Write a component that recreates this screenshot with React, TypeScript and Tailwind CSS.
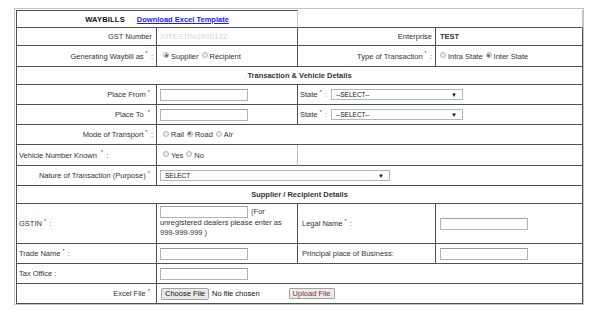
import React from "react";

const D = "border-[#505050]";

function Req() {
  return <span className="text-[#ff0000] text-[6px] relative -top-[3px] ml-[2px] leading-none">*</span>;
}

function Radio({ checked }: { checked?: boolean }) {
  return (
    <span className="inline-flex items-center justify-center w-[6px] h-[6px] rounded-full border border-[#b5b5b5] bg-[#ececec] mr-[2px] align-middle relative -top-[1px]">
      {checked && <span className="w-[3px] h-[3px] rounded-full bg-[#6b6b6b]" />}
    </span>
  );
}

function Input({ w = 88 }: { w?: number }) {
  return <span className="inline-block h-[12px] w-[88px] border border-[#b3b3b3] border-t-[#9d9d9d] bg-white align-middle" style={{ width: w }} />;
}

function Select({ w, text }: { w: number; text: string }) {
  return (
    <span className="inline-flex items-center justify-between h-[11px] border border-[#a9b7ca] bg-white pl-[4px] pr-[5px] text-[6.5px] text-[#111] align-middle" style={{ width: w }}>
      <span>{text}</span>
      <span className="text-[6px] leading-none">▼</span>
    </span>
  );
}

export default function App() {
  const cell = `border-r border-b ${D} flex items-center text-[#333]`;
  return (
    <div className="w-[592px] h-[313px] bg-white" style={{ fontFamily: '"Liberation Sans", Arial, sans-serif' }}>
      <div className="ml-[14px] mt-[8px] w-[570px] border border-[#c4c4c4] pl-px pt-px text-[7.5px] leading-[9px]">
        <div className={`grid grid-cols-[140px_141px_138px_147px] grid-rows-[18px_18px_21px_18px_20px_20px_20px_21px_20px_18px_40px_20px_20px_20px] border-l ${D}`}>
          {/* Row 1 */}
          <div className={`col-span-2 border-t ${D} border-b border-r border-r-[#c8c8c8] flex items-center justify-center gap-[12px]`}>
            <span className="font-bold text-[#111] tracking-[0.2px]">WAYBILLS</span>
            <span className="font-bold text-[#1a1aff] underline">Download Excel Template</span>
          </div>
          <div className={`col-span-2 border-b ${D} border-r border-r-[#c8c8c8]`} />

          {/* Row 2 */}
          <div className={`${cell} justify-end pr-[4px]`}>GST Number</div>
          <div className={`${cell} pl-[3px]`}>
            <span className="text-[#d4d4d4] blur-[0.6px]">33TESTING99D1ZZ</span>
          </div>
          <div className={`${cell} justify-end pr-[3px]`}>Enterprise</div>
          <div className={`${cell} pl-[4px] font-bold text-[#111]`}>TEST</div>

          {/* Row 3 */}
          <div className={`${cell} justify-end pr-[3px]`}>
            Generating Waybill as<Req /><span className="ml-[3px]">:</span>
          </div>
          <div className={`${cell} pl-[6px]`}>
            <Radio checked />Supplier<span className="ml-[3px]" /><Radio />Recipient
          </div>
          <div className={`${cell} justify-end pr-[3px]`}>
            Type of Transaction<Req /><span className="ml-[3px]">:</span>
          </div>
          <div className={`${cell} pl-[4px]`}>
            <Radio />Intra State<span className="ml-[3px]" /><Radio checked />Inter State
          </div>

          {/* Row 4 */}
          <div className={`${cell} col-span-4 justify-center font-bold text-[#111]`}>Transaction &amp; Vehicle Details</div>

          {/* Row 5 */}
          <div className={`${cell} justify-end pr-[6px]`}>
            Place From<Req />
          </div>
          <div className={`${cell} pl-[3px]`}>
            <Input />
          </div>
          <div className={`${cell} col-span-2 pl-[2px]`}>
            State<Req /><span className="ml-[3px] mr-[4px] text-[#888]">:</span>
            <Select w={132} text="--SELECT--" />
          </div>

          {/* Row 6 */}
          <div className={`${cell} justify-end pr-[6px]`}>
            Place To<span className="ml-[2px]" /><Req />
          </div>
          <div className={`${cell} pl-[3px]`}>
            <Input />
          </div>
          <div className={`${cell} col-span-2 pl-[2px]`}>
            State<Req /><span className="ml-[3px] mr-[4px] text-[#888]">:</span>
            <Select w={132} text="--SELECT--" />
          </div>

          {/* Row 7 */}
          <div className={`${cell} justify-end pr-[3px]`}>
            Mode of Transport<Req /><span className="ml-[3px]">:</span>
          </div>
          <div className={`${cell} col-span-3 pl-[6px]`}>
            <Radio />Rail<span className="ml-[3px]" /><Radio checked />Road<span className="ml-[3px]" /><Radio />Air
          </div>

          {/* Row 8 */}
          <div className={`${cell} pl-[2px]`}>
            Vehicle Number Known<span className="ml-[2px]" /><Req /><span className="ml-[3px]">:</span>
          </div>
          <div className={`${cell} border-r-[#c0c0c0] pl-[6px]`}>
            <Radio />Yes<span className="ml-[3px]" /><Radio />No
          </div>
          <div className={`${cell} col-span-2`} />

          {/* Row 9 */}
          <div className={`${cell} justify-end pr-[6px]`}>
            Nature of Transaction (Purpose)<Req />
          </div>
          <div className={`${cell} col-span-3 pl-[3px]`}>
            <Select w={230} text="SELECT" />
          </div>

          {/* Row 10 */}
          <div className={`${cell} col-span-4 justify-center font-bold text-[#111]`}>Supplier / Recipient Details</div>

          {/* Row 11 */}
          <div className={`${cell} pl-[2px]`}>
            GSTIN<Req /><span className="ml-[3px]">:</span>
          </div>
          <div className={`border-r border-b ${D} text-[#333] pl-[3px] pt-[2px] leading-[10px]`}>
            <Input /> <span className="ml-[1px]">(For unregistered dealers please enter as 999-999-999 )</span>
          </div>
          <div className={`${cell} pl-[4px]`}>
            Legal Name<Req /><span className="ml-[3px]">:</span>
          </div>
          <div className={`${cell} pl-[4px]`}>
            <Input />
          </div>

          {/* Row 12 */}
          <div className={`${cell} pl-[2px]`}>
            Trade Name<Req /><span className="ml-[3px]">:</span>
          </div>
          <div className={`${cell} pl-[3px]`}>
            <Input />
          </div>
          <div className={`${cell} pl-[4px]`}>Principal place of Business:</div>
          <div className={`${cell} pl-[4px]`}>
            <Input />
          </div>

          {/* Row 13 */}
          <div className={`${cell} pl-[2px]`}>Tax Office :</div>
          <div className={`${cell} col-span-3 pl-[3px]`}>
            <Input />
          </div>

          {/* Row 14 */}
          <div className={`${cell} justify-end pr-[6px]`}>
            Excel File<Req />
          </div>
          <div className={`${cell} col-span-3 pl-[4px]`}>
            <span className="inline-flex items-center h-[12px] px-[3px] border border-[#a3a3a3] rounded-[2px] bg-[#e9e9e9] text-[#111]">Choose File</span>
            <span className="ml-[3px] text-[#111]">No file chosen</span>
            <span className="ml-[29px] inline-flex items-center h-[11px] px-[3px] border border-[#a3a3a3] rounded-[1px] bg-[#ececec] text-[#7a3a2a]">Upload File</span>
          </div>
        </div>
      </div>
    </div>
  );
}
